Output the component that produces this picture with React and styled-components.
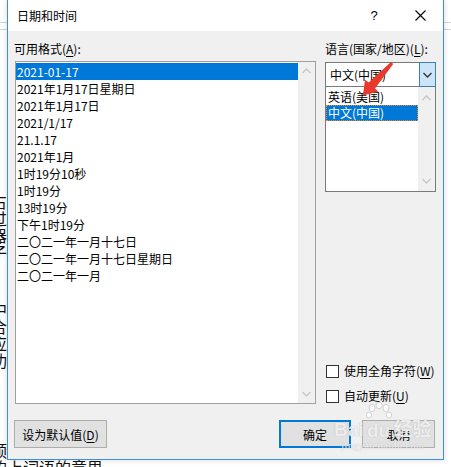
import { createGlobalStyle, styled } from "styled-components";

const GlobalStyle = createGlobalStyle`
	html, body {
		margin: 0;
		padding: 0;
		background: #fff;
		overflow: hidden;
	}
	* {
		box-sizing: border-box;
	}
`;

const formats = [
	"2021-01-17",
	"2021年1月17日星期日",
	"2021年1月17日",
	"2021/1/17",
	"21.1.17",
	"2021年1月",
	"1时19分10秒",
	"1时19分",
	"13时19分",
	"下午1时19分",
	"二〇二一年一月十七日",
	"二〇二一年一月十七日星期日",
	"二〇二一年一月",
];

const languages = ["英语(美国)", "中文(中国)"];

function Chevron({ up, color }) {
	return (
		<svg width="9" height="6" viewBox="0 0 9 6">
			<polyline
				points={up ? "0.5,5 4.5,1 8.5,5" : "0.5,1 4.5,5 8.5,1"}
				fill="none"
				stroke={color}
				strokeWidth="1.3"
			/>
		</svg>
	);
}

export default function App() {
	return (
		<>
			<GlobalStyle />
			<Page>
				<Doc>
					<Ruler />
					<DocBlock $top={163}>
						<p>占</p>
						<p>过</p>
						<p>器</p>
						<p>子</p>
					</DocBlock>
					<DocBlock $top={40}>
						<p>中</p>
						<p>合</p>
						<p>应</p>
						<p>功</p>
					</DocBlock>
					<DocBlock $top={73}>
						<p>预</p>
						<p>的上词语的意思</p>
					</DocBlock>
				</Doc>

				<Dialog>
					<TitleBar>
						<Title>日期和时间</Title>
						<TitleButton>?</TitleButton>
						<TitleButton>
							<svg width="11" height="11" viewBox="0 0 11 11">
								<path d="M0.5 0.5 L10.5 10.5 M10.5 0.5 L0.5 10.5" stroke="#000" strokeWidth="1.1" />
							</svg>
						</TitleButton>
					</TitleBar>

					<Body>
						<Columns>
							<LeftCol>
								<Label>
									可用格式(<u>A</u>):
								</Label>
								<FormatList>
									<Items>
										{formats.map((f, i) => (
											<Row key={f} $selected={i === 0}>
												{f}
											</Row>
										))}
									</Items>
									<ScrollBar>
										<Chevron up color="#c6c6c6" />
										<Chevron color="#c6c6c6" />
									</ScrollBar>
								</FormatList>
							</LeftCol>

							<RightCol>
								<Label>
									语言(国家/地区)(<u>L</u>):
								</Label>
								<Combo>
									<ComboText>中文(中国)</ComboText>
									<ComboButton>
										<Chevron color="#333" />
									</ComboButton>
								</Combo>
								<DropList>
									<DropItems>
										{languages.map((l, i) => (
											<DropRow key={l} $selected={i === 1}>
												{l}
											</DropRow>
										))}
									</DropItems>
									<DropScroll>
										<Chevron up color="#c6c6c6" />
										<Chevron color="#c6c6c6" />
									</DropScroll>
								</DropList>
								<Checks>
									<CheckRow>
										<Box />
										<span>
											使用全角字符(<u>W</u>)
										</span>
									</CheckRow>
									<CheckRow>
										<Box />
										<span>
											自动更新(<u>U</u>)
										</span>
									</CheckRow>
								</Checks>
							</RightCol>
						</Columns>

						<Buttons>
							<Button $width={93}>
								<span>
									设为默认值(<u>D</u>)
								</span>
							</Button>
							<Spacer />
							<Button $width={72} $primary>
								确定
							</Button>
							<Button $width={73}>取消</Button>
						</Buttons>
					</Body>

					<Watermark>
						<WmMain>
							Bai
							<Paw>
								<svg width="26" height="20" viewBox="0 0 26 20">
									<g fill="rgba(255,255,255,0.85)" stroke="rgba(170,170,170,0.6)" strokeWidth="0.8">
										<ellipse cx="6" cy="6" rx="3" ry="3.6" />
										<ellipse cx="13" cy="3.5" rx="3" ry="3.3" />
										<ellipse cx="20" cy="6" rx="3" ry="3.6" />
										<ellipse cx="3" cy="13" rx="2.6" ry="3" />
										<ellipse cx="23" cy="13" rx="2.6" ry="3" />
									</g>
								</svg>
								<span>du</span>
							</Paw>
							经验
						</WmMain>
						<WmSub>jingyan.baidu.com</WmSub>
					</Watermark>
				</Dialog>

				<Arrow width="451" height="467" viewBox="0 0 451 467">
					<polygon
						points="393.2,64.0 375.0,88.4 378.4,91.4 363,95.5 365.0,79.7 368.7,82.6 391.0,62.0"
						fill="#e8392c"
					/>
				</Arrow>
			</Page>
		</>
	);
}

const Page = styled.div`
	position: relative;
	width: 451px;
	height: 467px;
	overflow: hidden;
	background: #fff;
	font-family: "Noto Sans CJK SC", "Noto Sans", sans-serif;
	font-size: 12px;
	color: #000;
`;

const Doc = styled.div`
	display: flex;
	flex-direction: column;
	margin-left: -9px;
	font-family: "Noto Sans CJK SC", sans-serif;
	font-size: 16px;
	line-height: 17px;
	color: #111;
`;

const Ruler = styled.div`
	margin-top: 22px;
	margin-left: 9px;
	height: 8px;
	border-top: 1px solid #d4d4d4;
	border-bottom: 1px solid #d4d4d4;
`;

const DocBlock = styled.div`
	margin-top: ${(p) => p.$top}px;
	p {
		margin: 0;
		white-space: nowrap;
	}
`;

const Dialog = styled.div`
	position: absolute;
	z-index: 1;
	left: 7px;
	top: -1px;
	width: 437px;
	height: 461px;
	display: flex;
	flex-direction: column;
	background: #f0f0f0;
	border: 1px solid #3a8ee0;
	box-shadow: 0 0 6px rgba(0, 0, 0, 0.15);
`;

const TitleBar = styled.div`
	height: 31px;
	flex-shrink: 0;
	display: flex;
	align-items: center;
	background: #fff;
	padding-left: 9px;
`;

const Title = styled.div`
	flex: 1;
	font-size: 12px;
	line-height: 16px;
	padding-top: 1px;
`;

const TitleButton = styled.div`
	width: 46px;
	height: 31px;
	display: flex;
	align-items: center;
	justify-content: center;
	font-family: "Liberation Sans", sans-serif;
	font-size: 13px;
`;

const Body = styled.div`
	flex: 1;
	display: flex;
	flex-direction: column;
	padding: 10px 7px 11px 6px;
`;

const Columns = styled.div`
	display: flex;
	gap: 9px;
`;

const LeftCol = styled.div`
	display: flex;
	flex-direction: column;
	flex-shrink: 0;
	width: 302px;
`;

const RightCol = styled.div`
	flex: 1;
	min-width: 0;
	display: flex;
	flex-direction: column;
`;

const Label = styled.div`
	height: 16px;
	line-height: 16px;
	margin-bottom: 4px;
	white-space: nowrap;
	u {
		text-decoration-thickness: 1px;
		text-underline-offset: 2px;
	}
`;

const FormatList = styled.div`
	margin-left: 1px;
	height: 343px;
	display: flex;
	background: #fff;
	border: 1px solid #a0a0a0;
`;

const Items = styled.div`
	flex: 1;
	padding-top: 1px;
`;

const Row = styled.div`
	height: 17px;
	line-height: 17px;
	padding-left: 1px;
	white-space: nowrap;
	background: ${(p) => (p.$selected ? "#0078d7" : "transparent")};
	color: ${(p) => (p.$selected ? "#fff" : "#000")};
`;

const ScrollBar = styled.div`
	width: 17px;
	display: flex;
	flex-direction: column;
	justify-content: space-between;
	align-items: center;
	padding: 6px 0 6px;
	background: #f0f0f0;
`;

const Combo = styled.div`
	margin-top: 1px;
	height: 25px;
	display: flex;
	background: #fff;
	border: 1px solid #7a7a7a;
`;

const ComboText = styled.div`
	flex: 1;
	line-height: 23px;
	padding-left: 4px;
`;

const ComboButton = styled.div`
	width: 17px;
	margin: -1px -1px -1px 0;
	display: flex;
	align-items: center;
	justify-content: center;
	background: #cce4f7;
	border: 1px solid #3c7fb1;
`;

const DropList = styled.div`
	height: 105px;
	display: flex;
	background: #fff;
	border: 1px solid #7a7a7a;
	border-top: none;
`;

const DropItems = styled.div`
	flex: 1;
	padding-top: 2px;
`;

const DropRow = styled.div`
	height: 16px;
	line-height: 16px;
	padding-left: 2px;
	white-space: nowrap;
	background: ${(p) => (p.$selected ? "#0078d7" : "transparent")};
	color: ${(p) => (p.$selected ? "#fff" : "#000")};
	outline: ${(p) => (p.$selected ? "1px dotted #f08a24" : "none")};
	outline-offset: -1px;
`;

const DropScroll = styled.div`
	width: 17px;
	display: flex;
	flex-direction: column;
	justify-content: space-between;
	align-items: center;
	padding: 8px 0 7px;
	background: #f0f0f0;
`;

const Checks = styled.div`
	margin-top: auto;
	display: flex;
	flex-direction: column;
	gap: 9px;
`;

const CheckRow = styled.div`
	height: 16px;
	display: flex;
	align-items: center;
	gap: 5px;
	line-height: 16px;
	white-space: nowrap;
	u {
		text-underline-offset: 2px;
	}
`;

const Box = styled.span`
	width: 13px;
	height: 13px;
	margin-left: 1px;
	background: #fff;
	border: 1px solid #333;
`;

const Buttons = styled.div`
	margin-top: 16px;
	display: flex;
	gap: 11px;
`;

const Spacer = styled.div`
	flex: 1;
`;

const Button = styled.div`
	width: ${(p) => p.$width}px;
	height: 28px;
	display: flex;
	align-items: center;
	justify-content: center;
	background: #e1e1e1;
	border: ${(p) => (p.$primary ? "2px solid #0078d7" : "1px solid #adadad")};
	white-space: nowrap;
	&:last-child {
		margin-right: 1px;
	}
	u {
		text-underline-offset: 2px;
	}
`;

const Watermark = styled.div`
	position: absolute;
	left: 326px;
	top: 402px;
	display: flex;
	flex-direction: column;
	align-items: center;
	pointer-events: none;
	color: rgba(255, 255, 255, 0.8);
	text-shadow: 0 0 1px rgba(150, 150, 150, 0.7);
`;

const WmMain = styled.div`
	display: flex;
	align-items: flex-end;
	font-family: "Liberation Sans", "Noto Sans CJK SC", sans-serif;
	font-size: 19px;
	font-weight: bold;
	line-height: 20px;
`;

const Paw = styled.span`
	display: flex;
	flex-direction: column;
	align-items: center;
	margin: 0 2px;
	span {
		line-height: 18px;
	}
`;

const WmSub = styled.div`
	font-family: "Liberation Serif", serif;
	font-size: 10px;
	line-height: 11px;
	letter-spacing: 0.5px;
`;

const Arrow = styled.svg`
	position: absolute;
	z-index: 2;
	left: 0;
	top: 0;
	pointer-events: none;
`;
